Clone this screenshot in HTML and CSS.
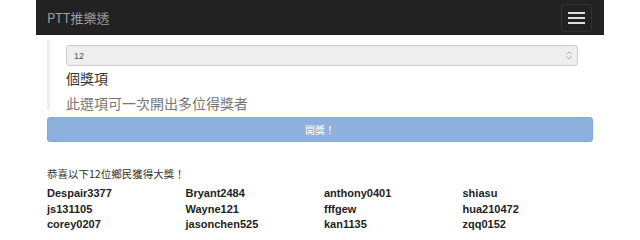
FILE: index.html
```html
<!DOCTYPE html>
<html lang="zh-Hant">
<head>
    <meta charset="UTF-8">
    <meta name="viewport" content="width=device-width, initial-scale=1.0">
    <title>PTT推樂透</title>
    <link rel="stylesheet" href="styles.css">
</head>
<body>
    <div class="container">
        <nav class="navbar">
            <a class="brand">PTT推樂透</a>
            <button class="toggle" aria-label="menu">
                <span class="bar"></span>
                <span class="bar"></span>
                <span class="bar"></span>
            </button>
        </nav>

        <div class="content">
            <div class="option-box">
                <div class="select-wrap">
                    <select class="count-select" disabled>
                        <option>12</option>
                    </select>
                    <svg class="select-arrow" width="8" height="9" viewBox="0 0 8 9">
                        <path d="M1.5 3.5 L4 1 L6.5 3.5 M1.5 5.5 L4 8 L6.5 5.5" fill="none" stroke="#aaa" stroke-width="1"/>
                    </svg>
                </div>
                <div class="unit">個獎項</div>
                <div class="hint">此選項可一次開出多位得獎者</div>
            </div>

            <button class="btn" disabled>開獎！</button>

            <div class="result">
                <p class="result-title">恭喜以下12位鄉民獲得大獎！</p>
                <div class="winners">
                    <span>Despair3377</span>
                    <span>Bryant2484</span>
                    <span>anthony0401</span>
                    <span>shiasu</span>
                    <span>js131105</span>
                    <span>Wayne121</span>
                    <span>fffgew</span>
                    <span>hua210472</span>
                    <span>corey0207</span>
                    <span>jasonchen525</span>
                    <span>kan1135</span>
                    <span>zqq0152</span>
                </div>
            </div>
        </div>
    </div>
</body>
</html>
```

FILE: styles.css
```css
body {
    margin: 0;
    background-color: #fff;
    font-family: "Liberation Sans", "Noto Sans CJK TC", sans-serif;
    color: #333;
}
.container {
    width: 568px;
    margin: 0 auto;
}
.navbar {
    height: 35px;
    background-color: #222;
    display: flex;
    align-items: center;
    justify-content: space-between;
    padding: 0 12px 0 11px;
}
.brand {
    color: #9d9d9d;
    font-size: 13px;
    font-family: "Noto Sans CJK TC", sans-serif;
    margin-top: -1px;
}
.toggle {
    width: 31px;
    height: 28px;
    background: transparent;
    border: 1px solid #333;
    border-radius: 3px;
    display: flex;
    flex-direction: column;
    justify-content: center;
    align-items: center;
    gap: 3px;
    padding: 0;
}
.toggle .bar {
    display: block;
    width: 17px;
    height: 2px;
    background-color: #ddd;
}
.content {
    padding: 0 11px;
}
.option-box {
    margin-top: 5px;
    border-left: 3px solid #eee;
    padding: 5px 15px 0 16px;
}
.select-wrap {
    position: relative;
}
.count-select {
    display: block;
    width: 100%;
    height: 21px;
    -webkit-appearance: none;
    appearance: none;
    background-color: #eee;
    border: 1px solid #ccc;
    border-radius: 3px;
    padding: 0 7px;
    font-size: 9px;
    color: #555;
    font-family: "Liberation Sans", sans-serif;
    opacity: 1;
}
.select-arrow {
    position: absolute;
    right: 5px;
    top: 6px;
}
.unit {
    font-family: "Noto Sans CJK TC", sans-serif;
    font-size: 14px;
    line-height: 19px;
    color: #333;
    margin-top: 3px;
}
.hint {
    font-family: "Noto Sans CJK TC", sans-serif;
    font-size: 14px;
    line-height: 14px;
    color: #777;
    margin-top: 8px;
}
.btn {
    display: block;
    width: 100%;
    height: 25px;
    margin-top: 7px;
    background-color: #8db1dc;
    border: 1px solid #84a9d6;
    border-radius: 3px;
    color: #fff;
    font-size: 10px;
    font-family: "Noto Sans CJK TC", sans-serif;
}
.result {
    margin-top: 24px;
}
.result-title {
    margin: 0 0 4px 0;
    font-family: "Noto Sans CJK TC", sans-serif;
    font-size: 10.5px;
    line-height: 16px;
    color: #333;
}
.winners {
    display: grid;
    grid-template-columns: repeat(4, 138.5px);
    font-weight: bold;
    font-size: 11px;
    line-height: 15.5px;
    color: #222;
}
```
